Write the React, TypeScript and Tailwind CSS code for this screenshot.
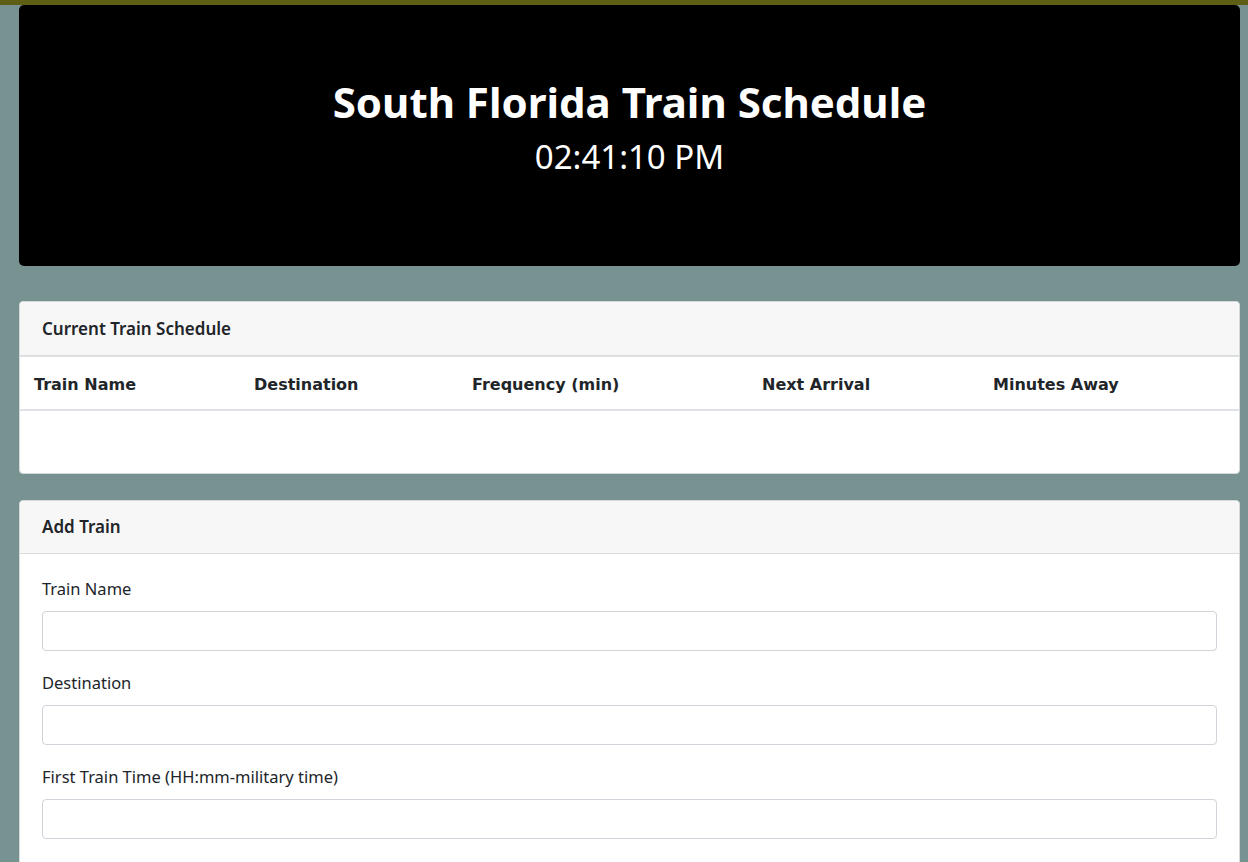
import React from 'react';

const columns = [
    { label: 'Train Name', width: 'w-[220px]' },
    { label: 'Destination', width: 'w-[218px]' },
    { label: 'Frequency (min)', width: 'w-[290px]' },
    { label: 'Next Arrival', width: 'w-[231px]' },
    { label: 'Minutes Away', width: 'flex-1' },
];

const fields = ['Train Name', 'Destination', 'First Train Time (HH:mm-military time)'];

const CardHeader: React.FC<{ title: string; height: string }> = ({ title, height }) => (
    <div className={`${height} flex items-center px-[22px] bg-[#f7f7f7] border-b border-[#dcdcdc] rounded-t-[4px]`}>
        <h5 className="text-[17px] font-semibold text-[#212529]">{title}</h5>
    </div>
);

export default function App() {
    return (
        <div
            className="min-h-[862px] bg-[#789191] border-t-[5px] border-[#5f5e15] pl-[19px] pr-[8px] text-[#212529]"
            style={{ fontFamily: '"Noto Sans", "Open Sans", sans-serif' }}
        >
            {/* Jumbotron */}
            <div className="h-[261px] bg-black rounded-[5px] flex flex-col items-center justify-center text-white pb-[16px]">
                <h1 className="text-[42px] font-bold leading-[48px]">South Florida Train Schedule</h1>
                <h2 className="text-[33px] leading-[40px] mt-[11px]">02:41:10 PM</h2>
            </div>

            {/* Schedule */}
            <div className="mt-[35px] bg-white border border-[#d4d9d9] rounded-[4px]">
                <CardHeader title="Current Train Schedule" height="h-[54px]" />
                <div className="flex h-[55px] items-center pt-[3px] border-t border-b-2 border-[#dee2e6]">
                    {columns.map((c) => (
                        <div
                            key={c.label}
                            className={`${c.width} pl-[14px] text-[16px] font-bold text-[#212529]`}
                            style={{ fontFamily: '"DejaVu Sans", Verdana, sans-serif' }}
                        >
                            {c.label}
                        </div>
                    ))}
                </div>
                <div className="h-[62px]" />
            </div>

            {/* Add train */}
            <div className="mt-[26px] bg-white border border-[#d4d9d9] rounded-t-[4px]">
                <CardHeader title="Add Train" height="h-[53px]" />
                <div className="px-[22px] pt-[23px] pb-[20px]">
                    {fields.map((f) => (
                        <div key={f} className="mb-[20px]">
                            <label className="block text-[16.5px] leading-[24px] mb-[10px]">{f}</label>
                            <input
                                type="text"
                                className="block w-full h-[40px] border border-[#ced4da] rounded-[4px] px-3 bg-white"
                            />
                        </div>
                    ))}
                </div>
            </div>
        </div>
    );
}
